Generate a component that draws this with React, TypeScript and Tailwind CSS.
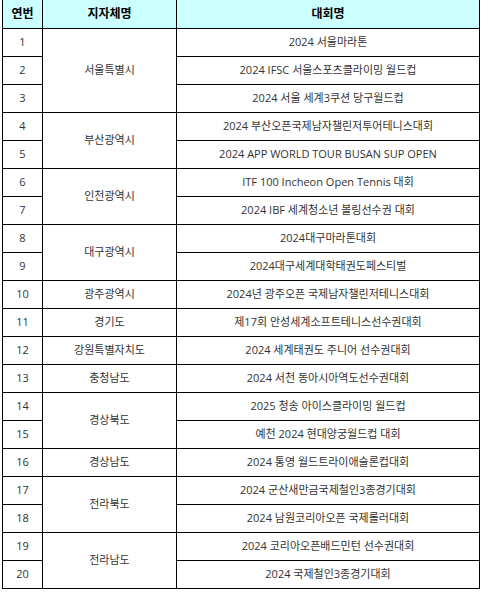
import React from "react";

type Group = { region: string; items: string[] };

const groups: Group[] = [
  { region: "서울특별시", items: ["2024 서울마라톤", "2024 IFSC 서울스포츠클라이밍 월드컵", "2024 서울 세계3쿠션 당구월드컵"] },
  { region: "부산광역시", items: ["2024 부산오픈국제남자챌린저투어테니스대회", "2024 APP WORLD TOUR BUSAN SUP OPEN"] },
  { region: "인천광역시", items: ["ITF 100 Incheon Open Tennis 대회", "2024 IBF 세계청소년 볼링선수권 대회"] },
  { region: "대구광역시", items: ["2024대구마라톤대회", "2024대구세계대학태권도페스티벌"] },
  { region: "광주광역시", items: ["2024년 광주오픈 국제남자챌린저테니스대회"] },
  { region: "경기도", items: ["제17회 안성세계소프트테니스선수권대회"] },
  { region: "강원특별자치도", items: ["2024 세계태권도 주니어 선수권대회"] },
  { region: "충청남도", items: ["2024 서천 동아시아역도선수권대회"] },
  { region: "경상북도", items: ["2025 청송 아이스클라이밍 월드컵", "예천 2024 현대양궁월드컵 대회"] },
  { region: "경상남도", items: ["2024 통영 월드트라이애슬론컵대회"] },
  { region: "전라북도", items: ["2024 군산새만금국제철인3종경기대회", "2024 남원코리아오픈 국제롤러대회"] },
  { region: "전라남도", items: ["2024 코리아오픈배드민턴 선수권대회", "2024 국제철인3종경기대회"] },
];

const font = { fontFamily: '"Open Sans", "Noto Sans CJK KR", sans-serif' };

export default function App() {
  const cells: React.ReactNode[] = [];
  let n = 0;
  let row = 2;
  groups.forEach((g, gi) => {
    g.items.forEach((item, i) => {
      n += 1;
      const r = row + i;
      cells.push(
        <div key={`n${n}`} className="flex items-center justify-center border-r border-b border-black text-[11px] text-[#333]" style={{ gridRow: r, gridColumn: 1 }}>
          {n}
        </div>
      );
      cells.push(
        <div key={`t${n}`} className="flex items-center justify-center border-r border-b border-black text-[11px] text-[#333] whitespace-nowrap" style={{ gridRow: r, gridColumn: 3 }}>
          {item}
        </div>
      );
    });
    cells.push(
      <div key={`g${gi}`} className="flex items-center justify-center border-r border-b border-black text-[11px] text-[#333]" style={{ gridRow: `${row} / span ${g.items.length}`, gridColumn: 2 }}>
        {g.region}
      </div>
    );
    row += g.items.length;
  });

  return (
    <div className="w-[483px] h-[592px] bg-white overflow-hidden" style={font}>
      <div className="ml-[2px] w-[478px] grid grid-cols-[40px_134px_303px] grid-rows-[29px_repeat(20,28px)] border-l border-black">
        <div className="flex items-center justify-center border-r border-b border-black bg-[#ccffff] text-[12px] font-bold text-black">연번</div>
        <div className="flex items-center justify-center border-r border-b border-black bg-[#ccffff] text-[12px] font-bold text-black">지자체명</div>
        <div className="flex items-center justify-center border-r border-b border-black bg-[#ccffff] text-[12px] font-bold text-black">대회명</div>
        {cells}
      </div>
    </div>
  );
}
